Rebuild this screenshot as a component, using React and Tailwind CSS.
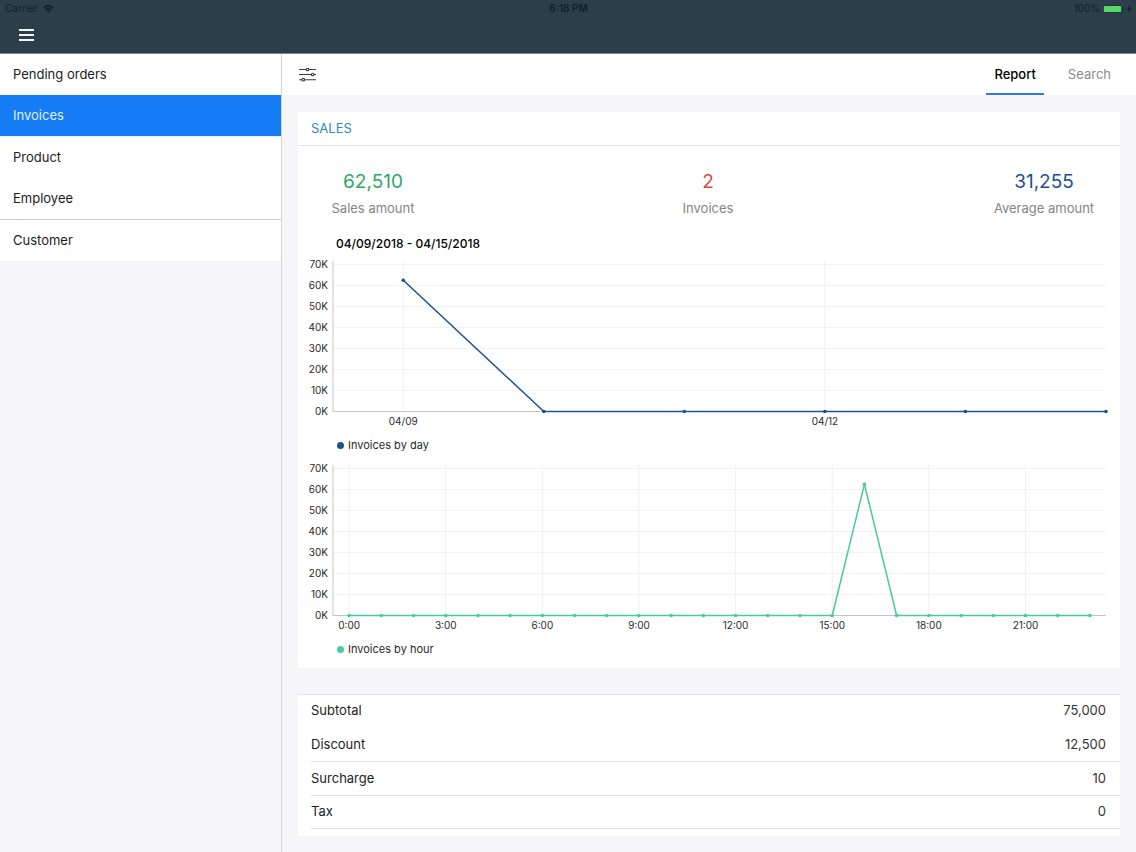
const menu = [
  { label: 'Pending orders', style: 'bg-white text-[#1c1c1c]' },
  { label: 'Invoices', style: 'bg-[#167cf6] text-[#dff0ff]', active: true },
  { label: 'Product', style: 'border-t border-[#e6f2fe] bg-white text-[#1c1c1c]' },
  { label: 'Employee', style: 'bg-white text-[#1c1c1c]' },
  { label: 'Customer', style: 'border-t border-[#cbcbcd] bg-white text-[#1c1c1c]' },
];

const stats = [
  { label: 'Sales amount', value: '62,510', column: 'w-[150px]', color: 'text-[#2fa866]' },
  { label: 'Invoices', value: '2', column: 'flex-1', color: 'text-[#e0453f]' },
  { label: 'Average amount', value: '31,255', column: 'w-[152px]', color: 'text-[#1f4f8f]' },
];

const totals = [
  { label: 'Subtotal', value: '75,000', height: 'h-[33px]', border: 'border-[#fdfdfd]' },
  { label: 'Discount', value: '12,500', height: 'h-[34px]', border: 'border-[#e2e1e4]' },
  { label: 'Surcharge', value: '10', height: 'h-[34px]', border: 'border-[#e2e1e4]' },
  { label: 'Tax', value: '0', height: 'h-[33px]', border: 'border-[#e2e1e4]' },
];

const dayChart = {
  name: 'Invoices by day',
  color: '#1b5390',
  values: [62.51, 0, 0, 0, 0, 0],
  span: 5.5,
  ticks: [[0, '04/09'], [3, '04/12']],
};

const hourChart = {
  name: 'Invoices by hour',
  color: '#45cb9f',
  values: Array.from({ length: 24 }, (_, hour) => (hour === 16 ? 62.51 : 0)),
  span: 24,
  ticks: [0, 3, 6, 9, 12, 15, 18, 21].map((hour) => [hour, `${hour}:00`]),
};

const BASE = 150;
const SCALE = 147 / 70;

function LineChart({ chart }) {
  const { name, color, values, span, ticks } = chart;
  const x = (i) => `${((i + 0.5) / span) * 100}%`;
  const y = (v) => BASE + 0.5 - v * SCALE;
  return (
    <figure className="pr-[14px] pl-[35px]">
      <svg
        role="img"
        aria-label={name}
        className="block h-[174px] w-full overflow-visible text-[10px]"
      >
        {[10, 20, 30, 40, 50, 60, 70].map((v) => (
          <line key={v} x1="0" x2="100%" y1={y(v)} y2={y(v)} stroke="#f3f2f4" />
        ))}
        {ticks.map(([i]) => (
          <line key={i} x1={x(i)} x2={x(i)} y1="0" y2={BASE} stroke="#f1f0f2" />
        ))}
        <line x1="0" x2="0" y1="0" y2={BASE + 1} stroke="#c6c6c8" />
        <line x1="0" x2="100%" y1={BASE + 0.5} y2={BASE + 0.5} stroke="#c6c6c8" />
        {[0, 10, 20, 30, 40, 50, 60, 70].map((v) => (
          <text key={v} x="-5" y={y(v) + 3} textAnchor="end" fill="#2a2a2a">
            {v}K
          </text>
        ))}
        {ticks.map(([i, label]) => (
          <text key={i} x={x(i)} y={BASE + 14} textAnchor="middle" fill="#2a2a2a">
            {label}
          </text>
        ))}
        {values.slice(1).map((v, i) => (
          <line key={i} x1={x(i)} y1={y(values[i])} x2={x(i + 1)} y2={y(v)} stroke={color} strokeWidth="1.5" strokeLinecap="round" />
        ))}
        {values.map((v, i) => (
          <circle key={i} cx={x(i)} cy={y(v)} r="1.8" fill={color} />
        ))}
      </svg>
      <figcaption className="flex h-5 items-center gap-1 pl-1 text-[11px] text-[#2a2a2a]">
        <svg className="size-[7px]" viewBox="0 0 7 7" aria-hidden="true">
          <circle cx="3.5" cy="3.5" r="3.5" fill={color} />
        </svg>
        {name}
      </figcaption>
    </figure>
  );
}

function StatusBar() {
  return (
    <div className="flex h-[17px] items-center justify-between pr-1 pl-[5px] text-[10px] text-[#101e29]">
      <div className="flex flex-1 items-center gap-[5px]">
        <span>Carrier</span>
        <svg className="h-2 w-[11px]" viewBox="0 0 11 8" fill="none" stroke="currentColor" strokeWidth="1.6" aria-hidden="true">
          <path d="M.6 3Q5.5-1.2 10.4 3M2.5 5Q5.5 2.4 8.5 5" />
          <path d="M3.9 6.1Q5.5 4.9 7.1 6.1L5.5 7.9Z" fill="currentColor" stroke="none" />
        </svg>
      </div>
      <span className="font-semibold">6:18 PM</span>
      <div className="flex flex-1 items-center justify-end gap-[3px]">
        <span>100%</span>
        <svg className="h-2 w-[29px]" viewBox="0 0 29 8" aria-hidden="true">
          <rect x="0" y=".3" width="19" height="7.4" rx="1.5" fill="#1d3340" />
          <rect x=".8" y="1" width="17.4" height="6" rx=".8" fill="#5bd66b" />
          <path d="M19.8 2.5Q21.3 4 19.8 5.5Z" fill="#101e29" />
          <path d="M27 0L24 4.4H26L25.2 8L28.5 3.4H26.5Z" fill="#101e29" />
        </svg>
      </div>
    </div>
  );
}

export default function App() {
  return (
    <div className="flex min-h-screen flex-col bg-[#f6f5f8] font-['Inter',sans-serif] text-[13px] text-[#1c1c1c]">
      <header className="h-[54px] border-b border-[#7a8994] bg-[#2d3e4b]">
        <StatusBar />
        <button type="button" aria-label="Menu" className="block px-[19px] py-3">
          <svg className="h-3 w-[15px]" viewBox="0 0 15 12" fill="none" stroke="#f4f7f8" strokeWidth="1.8" aria-hidden="true">
            <path d="M0 1H15M0 6H15M0 11H15" />
          </svg>
        </button>
      </header>

      <div className="flex flex-1">
        <nav className="w-[282px] shrink-0 border-r border-[#d3d2d6]">
          {menu.map((item) => (
            <a
              key={item.label}
              href="#"
              aria-current={item.active ? 'page' : undefined}
              className={`box-content flex h-[41px] items-center pl-[13px] ${item.style}`}
            >
              {item.label}
            </a>
          ))}
        </nav>

        <div className="flex min-w-0 flex-1 flex-col">
          <div className="flex h-[41px] items-stretch justify-between bg-white pr-[17px] pl-[17px]">
            <button type="button" aria-label="Filters">
              <svg className="h-[14px] w-[17px]" viewBox="0 0 17 14" fill="#fff" stroke="#3c3c3c" strokeWidth="1.1" aria-hidden="true">
                <path d="M0 1.5H17M0 6.5H17M0 11.7H17" />
                <circle cx="8.5" cy="1.5" r="1.3" />
                <circle cx="13.7" cy="6.5" r="1.3" />
                <circle cx="4.3" cy="11.7" r="1.3" />
              </svg>
            </button>
            <div role="tablist" className="flex gap-4">
              <button type="button" role="tab" aria-selected="true" className="border-b-2 border-[#2f7bd8] px-2 pt-0.5 font-medium text-black">
                Report
              </button>
              <button type="button" role="tab" aria-selected="false" className="px-2 text-[#8b8b8b]">
                Search
              </button>
            </div>
          </div>

          <main className="flex flex-col gap-[26px] px-4 pt-[17px] pb-4">
            <section className="bg-white pb-[9px]">
              <h2 className="flex h-[34px] items-center border-b border-[#e4e4e5] pl-[13px] text-[#3389b8]">SALES</h2>
              <div className="flex pt-6">
                {stats.map((stat) => (
                  <div key={stat.label} className={`flex flex-col items-center gap-1 ${stat.column}`}>
                    <span className={`text-[19px] leading-6 ${stat.color}`}>{stat.value}</span>
                    <span className="leading-5 text-[#858585]">{stat.label}</span>
                  </div>
                ))}
              </div>
              <h3 className="pt-[17px] pb-2 pl-[38px] text-[12px] leading-[18px] font-medium text-black">04/09/2018 - 04/15/2018</h3>
              <div className="flex flex-col gap-[10px]">
                <LineChart chart={dayChart} />
                <LineChart chart={hourChart} />
              </div>
            </section>

            <section className="border-t border-[#e4e3e6] bg-white pb-[7px] pl-[13px]">
              <table className="w-full border-separate border-spacing-0">
                <tbody>
                  {totals.map((row) => (
                    <tr key={row.label} className={row.height}>
                      <th scope="row" className={`border-b p-0 text-left font-normal ${row.border}`}>
                        {row.label}
                      </th>
                      <td className={`border-b p-0 pr-[14px] text-right text-[#333] ${row.border}`}>{row.value}</td>
                    </tr>
                  ))}
                </tbody>
              </table>
            </section>
          </main>
        </div>
      </div>
    </div>
  );
}
